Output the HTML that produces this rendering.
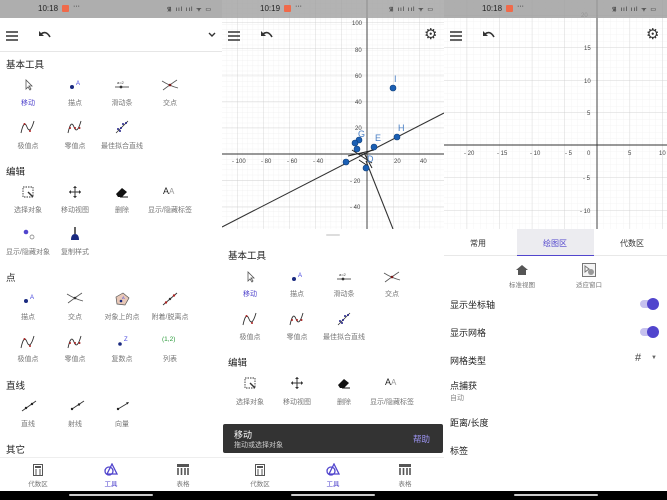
<!DOCTYPE html>
<html><head><meta charset="utf-8">
<style>
*{margin:0;padding:0;box-sizing:border-box}
body{width:667px;height:500px;overflow:hidden;background:#fff;font-family:"Liberation Sans","Noto Sans CJK SC",sans-serif;position:relative}
.p{position:absolute;top:0;height:500px;overflow:hidden;background:#fff}
.sb{position:absolute;left:0;top:0;width:100%;height:18px;background:rgba(160,160,160,.85);z-index:5}
.sb .t{position:absolute;left:38px;top:4px;font-size:8px;color:#222}
.sb .r{position:absolute;right:10px;top:5px;font-size:6px;color:#222;letter-spacing:1px}
.sb .n{position:absolute;left:62px;top:5px;width:7px;height:7px;background:#f06a4a;border-radius:1px}
.a{position:absolute;white-space:nowrap}
.lb{position:absolute;font-size:7px;color:#777;transform:translateX(-50%);white-space:nowrap}
.h{position:absolute;font-size:9.5px;color:#222;left:6px}
.bb{position:absolute;left:0;bottom:0;width:100%;height:9px;background:#000}
.bb i{position:absolute;left:50%;top:3px;width:84px;height:2px;margin-left:-42px;background:#ccc;border-radius:1px}
.nav{position:absolute;left:0;top:457px;width:100%;height:34px;background:#fff;border-top:1px solid #eee}
.nv{position:absolute;font-size:6.5px;color:#777;transform:translateX(-50%)}
.ic{position:absolute}
.row{position:absolute;left:6px;font-size:9px;color:#222}
</style></head><body>

<!-- PANEL 1 -->
<div class="p" style="left:0;width:222px">
<div class="sb"><span class="t">10:18</span><span class="n"></span><span class="a" style="left:73px;top:3px;font-size:7px">···</span><span class="r">᯾ ııl ııl ᯤ ▭</span></div>
<svg class="ic" style="left:6px;top:31px" width="13" height="10"><path d="M0 1h12M0 5h12M0 9h12" stroke="#333" stroke-width="1.5"/></svg>
<svg class="ic" style="left:38px;top:30px" width="14" height="10"><path d="M3 4 Q8 0 12 7" stroke="#333" stroke-width="1.6" fill="none"/><path d="M1 1 L1 6 L6 6Z" fill="#333"/></svg>
<svg class="ic" style="left:208px;top:32px" width="8" height="6"><path d="M1 1 L4 4 L7 1" stroke="#333" stroke-width="1.4" fill="none"/></svg>
<div style="position:absolute;left:0;top:51px;width:222px;height:1px;background:#e6e6e6"></div>
<div class="h" style="top:57px">基本工具</div>
<!-- row1 -->
<svg class="ic" style="left:24px;top:79px" width="10" height="12"><path d="M2 1 L2 10 L4 8 L6 11 L7 10 L5 7 L8 7Z" fill="#fff" stroke="#555" stroke-width=".8"/></svg>
<div class="lb" style="left:28px;top:98px;color:#5145cd">移动</div>
<svg class="ic" style="left:68px;top:79px" width="14" height="12"><circle cx="4" cy="8" r="2" fill="#1a2a80"/><text x="8" y="6" font-size="6" fill="#4444dd" font-family="Liberation Sans">A</text></svg>
<div class="lb" style="left:75px;top:98px">描点</div>
<svg class="ic" style="left:114px;top:80px" width="16" height="10"><text x="3" y="4" font-size="4" fill="#333">a=2</text><path d="M1 7h14" stroke="#333" stroke-width=".8"/><circle cx="7" cy="7" r="1.4" fill="#333"/></svg>
<div class="lb" style="left:122px;top:98px">滑动条</div>
<svg class="ic" style="left:161px;top:79px" width="18" height="12"><path d="M1 2 Q9 7 17 9 M2 11 Q10 5 16 1" stroke="#555" stroke-width=".8" fill="none"/><circle cx="9" cy="6" r="1.3" fill="#7a1a1a"/></svg>
<div class="lb" style="left:170px;top:98px">交点</div>
<!-- row2 -->
<svg class="ic" style="left:20px;top:119px" width="16" height="16"><path d="M1 14 Q4 0 7 8 Q10 16 14 2" stroke="#333" stroke-width=".9" fill="none"/><circle cx="4.5" cy="5" r="1" fill="#a22"/><circle cx="10" cy="12" r="1" fill="#a22"/></svg>
<div class="lb" style="left:28px;top:141px">极值点</div>
<svg class="ic" style="left:67px;top:119px" width="16" height="16"><path d="M1 14 Q4 0 7 8 Q10 16 14 2" stroke="#333" stroke-width=".9" fill="none"/><circle cx="3" cy="9" r="1" fill="#a22"/><circle cx="8" cy="9" r="1" fill="#a22"/><circle cx="12.5" cy="9" r="1" fill="#a22"/></svg>
<div class="lb" style="left:75px;top:141px">零值点</div>
<svg class="ic" style="left:115px;top:120px" width="14" height="14"><path d="M1 13 L13 1" stroke="#333" stroke-width=".8"/><circle cx="3" cy="9" r="1" fill="#228"/><circle cx="6" cy="8" r="1" fill="#228"/><circle cx="8" cy="4" r="1" fill="#228"/><circle cx="11" cy="3" r="1" fill="#228"/><circle cx="5" cy="11" r="1" fill="#228"/></svg>
<div class="lb" style="left:122px;top:141px">最佳拟合直线</div>
<div class="h" style="top:164px">编辑</div>
<svg class="ic" style="left:22px;top:186px" width="12" height="12"><rect x="1" y="1" width="10" height="10" fill="none" stroke="#333" stroke-dasharray="1.5 1" stroke-width=".9"/><path d="M6 6 L11 11" stroke="#333" stroke-width="1.4"/></svg>
<div class="lb" style="left:28px;top:205px">选择对象</div>
<svg class="ic" style="left:69px;top:186px" width="12" height="12"><path d="M6 0v12M0 6h12" stroke="#333" stroke-width="1"/><path d="M6 0l-2 2h4zM6 12l-2-2h4zM0 6l2-2v4zM12 6l-2-2v4z" fill="#333"/></svg>
<div class="lb" style="left:75px;top:205px">移动视图</div>
<svg class="ic" style="left:115px;top:186px" width="14" height="12"><path d="M1 8 L7 2 L12 6 L7 11 L3 11Z" fill="#111"/><path d="M5 11h8" stroke="#111"/></svg>
<div class="lb" style="left:122px;top:205px">删除</div>
<div class="a" style="left:163px;top:186px;font-size:9px;color:#222">A<span style="color:#999;font-size:8px">A</span></div>
<div class="lb" style="left:170px;top:205px">显示/隐藏标签</div>
<svg class="ic" style="left:22px;top:228px" width="14" height="12"><circle cx="4" cy="4" r="2.3" fill="#5145cd"/><circle cx="10" cy="9" r="2" fill="#fff" stroke="#777" stroke-width=".7"/></svg>
<div class="lb" style="left:28px;top:247px">显示/隐藏对象</div>
<svg class="ic" style="left:70px;top:227px" width="10" height="14"><path d="M5 0v7" stroke="#222" stroke-width="1.4"/><path d="M1 13 Q1 7 5 7 Q9 7 9 13Z" fill="#1a2a80"/></svg>
<div class="lb" style="left:75px;top:247px">复制样式</div>
<div class="h" style="top:270px">点</div>
<svg class="ic" style="left:22px;top:293px" width="14" height="12"><circle cx="4" cy="8" r="2" fill="#1a2a80"/><text x="8" y="6" font-size="6" fill="#4444dd">A</text></svg>
<div class="lb" style="left:28px;top:312px">描点</div>
<svg class="ic" style="left:66px;top:292px" width="18" height="12"><path d="M1 2 Q9 7 17 9 M2 11 Q10 5 16 1" stroke="#555" stroke-width=".8" fill="none"/><circle cx="9" cy="6" r="1.3" fill="#333"/></svg>
<div class="lb" style="left:75px;top:312px">交点</div>
<svg class="ic" style="left:114px;top:292px" width="16" height="14"><path d="M2 5 L9 1 L15 6 L11 13 L3 12Z" fill="#e8c8b8" stroke="#555" stroke-width=".7"/><circle cx="7" cy="9" r="1.3" fill="#1a2a80"/><text x="8" y="7" font-size="4" fill="#44d">A</text></svg>
<div class="lb" style="left:122px;top:312px">对象上的点</div>
<svg class="ic" style="left:162px;top:292px" width="16" height="14"><path d="M1 13 L15 1" stroke="#333" stroke-width=".9"/><circle cx="4" cy="10.5" r="1.2" fill="#a22"/><circle cx="8" cy="7" r="1.2" fill="#333"/><circle cx="12" cy="3.5" r="1.2" fill="#a22"/></svg>
<div class="lb" style="left:170px;top:312px">附着/脱离点</div>
<svg class="ic" style="left:20px;top:334px" width="16" height="16"><path d="M1 14 Q4 0 7 8 Q10 16 14 2" stroke="#333" stroke-width=".9" fill="none"/><circle cx="4.5" cy="5" r="1" fill="#a22"/><circle cx="10" cy="12" r="1" fill="#a22"/></svg>
<div class="lb" style="left:28px;top:354px">极值点</div>
<svg class="ic" style="left:67px;top:334px" width="16" height="16"><path d="M1 14 Q4 0 7 8 Q10 16 14 2" stroke="#333" stroke-width=".9" fill="none"/><circle cx="3" cy="9" r="1" fill="#a22"/><circle cx="8" cy="9" r="1" fill="#a22"/><circle cx="12.5" cy="9" r="1" fill="#a22"/></svg>
<div class="lb" style="left:75px;top:354px">零值点</div>
<svg class="ic" style="left:117px;top:335px" width="14" height="12"><circle cx="3" cy="9" r="1.8" fill="#1a2a80"/><text x="7" y="6" font-size="6" fill="#44d">Z</text></svg>
<div class="lb" style="left:122px;top:354px">复数点</div>
<div class="a" style="left:162px;top:336px;font-size:6.5px;color:#2a9a3a">(1,2)</div>
<div class="lb" style="left:170px;top:354px">列表</div>
<div class="h" style="top:378px">直线</div>
<svg class="ic" style="left:21px;top:400px" width="16" height="12"><path d="M1 11 L15 1" stroke="#333" stroke-width=".9"/><circle cx="5" cy="8" r="1.2" fill="#222"/><circle cx="11" cy="4" r="1.2" fill="#222"/></svg>
<div class="lb" style="left:28px;top:419px">直线</div>
<svg class="ic" style="left:69px;top:400px" width="16" height="12"><path d="M3 9 L15 1" stroke="#333" stroke-width=".9"/><circle cx="3" cy="9" r="1.2" fill="#222"/><circle cx="10" cy="4.5" r="1.2" fill="#222"/></svg>
<div class="lb" style="left:75px;top:419px">射线</div>
<svg class="ic" style="left:116px;top:400px" width="16" height="12"><path d="M2 9 L12 3" stroke="#333" stroke-width=".9"/><circle cx="2" cy="9" r="1.2" fill="#222"/><path d="M13 2 l-3 0.5 l1.5 2z" fill="#222"/></svg>
<div class="lb" style="left:122px;top:419px">向量</div>
<div class="h" style="top:442px">其它</div>
<div class="nav">
<svg class="ic" style="left:33px;top:6px" width="10" height="12"><rect x=".5" y=".5" width="9" height="11" fill="none" stroke="#555"/><rect x="2" y="2" width="6" height="2" fill="#555"/><path d="M2 6h2M6 6h2M2 8h2M6 8h2M2 10h2M6 10h2" stroke="#555"/></svg>
<div class="nv" style="left:38px;top:20px">代数区</div>
<svg class="ic" style="left:104px;top:5px" width="14" height="13"><circle cx="5" cy="8" r="4" fill="none" stroke="#5145cd" stroke-width="1.3"/><path d="M8 1 L13 11 L3 11Z" fill="none" stroke="#5145cd" stroke-width="1.3"/></svg>
<div class="nv" style="left:111px;top:20px;color:#5145cd">工具</div>
<svg class="ic" style="left:177px;top:6px" width="12" height="11"><rect x="0" y="0" width="12" height="3" fill="#555"/><path d="M1 4v7M4.5 4v7M8 4v7M11 4v7" stroke="#555" stroke-width="1.6"/></svg>
<div class="nv" style="left:183px;top:20px">表格</div>
</div>
<div class="bb"><i></i></div>
</div>

<!-- PANEL 2 -->
<div class="p" style="left:222px;width:222px">
<svg style="position:absolute;left:0;top:0" width="222" height="229">
<defs>
<pattern id="m2" x="145" y="154" width="5.2" height="5.2" patternUnits="userSpaceOnUse"><path d="M0 0V5.2M0 0H5.2" stroke="#eee" stroke-width=".6"/></pattern>
<pattern id="M2" x="145" y="154" width="26" height="26.4" patternUnits="userSpaceOnUse"><path d="M0 0V26.4M0 0H26" stroke="#ccc" stroke-width=".7"/></pattern>
</defs>
<rect width="222" height="229" fill="url(#m2)"/><rect width="222" height="229" fill="url(#M2)"/>
<path d="M145 0V229M0 154H222" stroke="#333" stroke-width=".9"/>
<g font-size="6" fill="#444" font-family="Liberation Sans">
<text x="10" y="163">- 100</text><text x="39" y="163">- 80</text><text x="65" y="163">- 60</text><text x="91" y="163">- 40</text><text x="172" y="163">20</text><text x="198" y="163">40</text>
<text x="130" y="25">100</text><text x="133" y="52">80</text><text x="133" y="78">60</text><text x="133" y="104">40</text><text x="133" y="130">20</text><text x="128" y="209">- 40</text><text x="128" y="183">- 20</text>
</g>
<path d="M0 227 L222 113" stroke="#333" stroke-width="1.1"/>
<path d="M144 161 L171 229" stroke="#333" stroke-width="1.1"/>
<path d="M126 156 L152 150 M130 150 L150 163 M137 160 L146 166 M142 153 L150 168" stroke="#222" stroke-width="1"/>
<g fill="#1a5fb4" stroke="#0c3d7a" stroke-width=".6">
<circle cx="171" cy="88" r="3"/><circle cx="175" cy="137" r="3"/><circle cx="152" cy="147" r="3"/><circle cx="137" cy="140" r="3"/><circle cx="133" cy="143" r="3"/><circle cx="135" cy="149" r="3"/><circle cx="124" cy="162" r="3"/><circle cx="144" cy="168" r="3"/>
</g>
<g font-size="9" fill="#4a7fc4" font-family="Liberation Sans"><text x="172" y="82">I</text><text x="176" y="131">H</text><text x="153" y="141">E</text><text x="136" y="137">G</text><text x="145" y="162">D</text></g>
</svg>
<div class="sb" style="background:rgba(160,160,160,.8)"><span class="t">10:19</span><span class="n"></span><span class="a" style="left:73px;top:3px;font-size:7px">···</span><span class="r">᯾ ııl ııl ᯤ ▭</span></div>
<svg class="ic" style="left:6px;top:31px" width="13" height="10"><path d="M0 1h12M0 5h12M0 9h12" stroke="#333" stroke-width="1.5"/></svg>
<svg class="ic" style="left:38px;top:30px" width="14" height="10"><path d="M3 4 Q8 0 12 7" stroke="#333" stroke-width="1.6" fill="none"/><path d="M1 1 L1 6 L6 6Z" fill="#333"/></svg>
<div class="a" style="left:202px;top:25px;font-size:15px;color:#333">⚙</div>
<div style="position:absolute;left:104px;top:234px;width:14px;height:2px;background:#ddd;border-radius:1px"></div>
<div class="h" style="top:248px">基本工具</div>
<svg class="ic" style="left:24px;top:271px" width="10" height="12"><path d="M2 1 L2 10 L4 8 L6 11 L7 10 L5 7 L8 7Z" fill="#fff" stroke="#555" stroke-width=".8"/></svg>
<div class="lb" style="left:28px;top:289px;color:#5145cd">移动</div>
<svg class="ic" style="left:68px;top:271px" width="14" height="12"><circle cx="4" cy="8" r="2" fill="#1a2a80"/><text x="8" y="6" font-size="6" fill="#44d">A</text></svg>
<div class="lb" style="left:75px;top:289px">描点</div>
<svg class="ic" style="left:114px;top:272px" width="16" height="10"><text x="3" y="4" font-size="4" fill="#333">a=2</text><path d="M1 7h14" stroke="#333" stroke-width=".8"/><circle cx="7" cy="7" r="1.4" fill="#333"/></svg>
<div class="lb" style="left:122px;top:289px">滑动条</div>
<svg class="ic" style="left:161px;top:271px" width="18" height="12"><path d="M1 2 Q9 7 17 9 M2 11 Q10 5 16 1" stroke="#555" stroke-width=".8" fill="none"/><circle cx="9" cy="6" r="1.3" fill="#7a1a1a"/></svg>
<div class="lb" style="left:170px;top:289px">交点</div>
<svg class="ic" style="left:20px;top:311px" width="16" height="16"><path d="M1 14 Q4 0 7 8 Q10 16 14 2" stroke="#333" stroke-width=".9" fill="none"/><circle cx="4.5" cy="5" r="1" fill="#a22"/><circle cx="10" cy="12" r="1" fill="#a22"/></svg>
<div class="lb" style="left:28px;top:332px">极值点</div>
<svg class="ic" style="left:67px;top:311px" width="16" height="16"><path d="M1 14 Q4 0 7 8 Q10 16 14 2" stroke="#333" stroke-width=".9" fill="none"/><circle cx="3" cy="9" r="1" fill="#a22"/><circle cx="8" cy="9" r="1" fill="#a22"/><circle cx="12.5" cy="9" r="1" fill="#a22"/></svg>
<div class="lb" style="left:75px;top:332px">零值点</div>
<svg class="ic" style="left:115px;top:312px" width="14" height="14"><path d="M1 13 L13 1" stroke="#333" stroke-width=".8"/><circle cx="3" cy="9" r="1" fill="#228"/><circle cx="6" cy="8" r="1" fill="#228"/><circle cx="8" cy="4" r="1" fill="#228"/><circle cx="11" cy="3" r="1" fill="#228"/><circle cx="5" cy="11" r="1" fill="#228"/></svg>
<div class="lb" style="left:122px;top:332px">最佳拟合直线</div>
<div class="h" style="top:355px">编辑</div>
<svg class="ic" style="left:22px;top:377px" width="12" height="12"><rect x="1" y="1" width="10" height="10" fill="none" stroke="#333" stroke-dasharray="1.5 1" stroke-width=".9"/><path d="M6 6 L11 11" stroke="#333" stroke-width="1.4"/></svg>
<div class="lb" style="left:28px;top:397px">选择对象</div>
<svg class="ic" style="left:69px;top:377px" width="12" height="12"><path d="M6 0v12M0 6h12" stroke="#333" stroke-width="1"/><path d="M6 0l-2 2h4zM6 12l-2-2h4zM0 6l2-2v4zM12 6l-2-2v4z" fill="#333"/></svg>
<div class="lb" style="left:75px;top:397px">移动视图</div>
<svg class="ic" style="left:115px;top:377px" width="14" height="12"><path d="M1 8 L7 2 L12 6 L7 11 L3 11Z" fill="#111"/><path d="M5 11h8" stroke="#111"/></svg>
<div class="lb" style="left:122px;top:397px">删除</div>
<div class="a" style="left:163px;top:377px;font-size:9px;color:#222">A<span style="color:#999;font-size:8px">A</span></div>
<div class="lb" style="left:170px;top:397px">显示/隐藏标签</div>
<div style="position:absolute;left:1px;top:424px;width:220px;height:29px;background:#333;border-radius:2px">
<div class="a" style="left:11px;top:4px;font-size:9px;color:#fff">移动</div>
<div class="a" style="left:11px;top:16px;font-size:7px;color:#ccc">拖动或选择对象</div>
<div class="a" style="left:190px;top:9px;font-size:8.5px;color:#9b93f0">帮助</div>
</div>
<div class="nav">
<svg class="ic" style="left:33px;top:6px" width="10" height="12"><rect x=".5" y=".5" width="9" height="11" fill="none" stroke="#555"/><rect x="2" y="2" width="6" height="2" fill="#555"/><path d="M2 6h2M6 6h2M2 8h2M6 8h2M2 10h2M6 10h2" stroke="#555"/></svg>
<div class="nv" style="left:38px;top:20px">代数区</div>
<svg class="ic" style="left:104px;top:5px" width="14" height="13"><circle cx="5" cy="8" r="4" fill="none" stroke="#5145cd" stroke-width="1.3"/><path d="M8 1 L13 11 L3 11Z" fill="none" stroke="#5145cd" stroke-width="1.3"/></svg>
<div class="nv" style="left:111px;top:20px;color:#5145cd">工具</div>
<svg class="ic" style="left:177px;top:6px" width="12" height="11"><rect x="0" y="0" width="12" height="3" fill="#555"/><path d="M1 4v7M4.5 4v7M8 4v7M11 4v7" stroke="#555" stroke-width="1.6"/></svg>
<div class="nv" style="left:183px;top:20px">表格</div>
</div>
<div class="bb"><i></i></div>
</div>

<!-- PANEL 3 -->
<div class="p" style="left:444px;width:223px">
<svg style="position:absolute;left:0;top:0" width="223" height="229">
<defs>
<pattern id="m3" x="153" y="145" width="6.5" height="6.5" patternUnits="userSpaceOnUse"><path d="M0 0V6.5M0 0H6.5" stroke="#eee" stroke-width=".6"/></pattern>
<pattern id="M3" x="153" y="145" width="32.6" height="32.5" patternUnits="userSpaceOnUse"><path d="M0 0V32.5M0 0H32.6" stroke="#ccc" stroke-width=".7"/></pattern>
</defs>
<rect width="223" height="229" fill="url(#m3)"/><rect width="223" height="229" fill="url(#M3)"/>
<path d="M153 0V229M0 145H223" stroke="#333" stroke-width=".9"/>
<g font-size="6" fill="#444" font-family="Liberation Sans">
<text x="20" y="155">- 20</text><text x="53" y="155">- 15</text><text x="86" y="155">- 10</text><text x="121" y="155">- 5</text><text x="143" y="155">0</text><text x="184" y="155">5</text><text x="215" y="155">10</text>
<text x="137" y="17">20</text><text x="140" y="50">15</text><text x="140" y="83">10</text><text x="143" y="115">5</text><text x="139" y="180">- 5</text><text x="136" y="213">- 10</text>
</g>
</svg>
<div class="sb"><span class="t">10:18</span><span class="n"></span><span class="a" style="left:73px;top:3px;font-size:7px">···</span><span class="r">᯾ ııl ııl ᯤ ▭</span></div>
<svg class="ic" style="left:6px;top:31px" width="13" height="10"><path d="M0 1h12M0 5h12M0 9h12" stroke="#333" stroke-width="1.5"/></svg>
<svg class="ic" style="left:38px;top:30px" width="14" height="10"><path d="M3 4 Q8 0 12 7" stroke="#333" stroke-width="1.6" fill="none"/><path d="M1 1 L1 6 L6 6Z" fill="#333"/></svg>
<div class="a" style="left:202px;top:25px;font-size:15px;color:#333">⚙</div>
<div style="position:absolute;left:0;top:229px;width:223px;height:27px;background:#fff;border-bottom:1px solid #e8e8e8"></div>
<div style="position:absolute;left:73px;top:229px;width:77px;height:27px;background:#ececf0;border-bottom:1.5px solid #5145cd"></div>
<div class="a" style="left:26px;top:238px;font-size:8px;color:#333">常用</div>
<div class="a" style="left:99px;top:238px;font-size:8px;color:#5145cd">绘图区</div>
<div class="a" style="left:176px;top:238px;font-size:8px;color:#333">代数区</div>
<svg class="ic" style="left:72px;top:265px" width="12" height="10"><path d="M6 0 L12 5 L10 5 L10 10 L2 10 L2 5 L0 5Z" fill="#555"/></svg>
<div class="lb" style="left:78px;top:279px;font-size:6.5px">标准视图</div>
<svg class="ic" style="left:138px;top:263px" width="14" height="14"><rect x=".5" y=".5" width="13" height="13" fill="#f4f4f4" stroke="#777"/><path d="M3 3 L7 6 L3 9Z" fill="none" stroke="#777"/><circle cx="9" cy="9" r="3" fill="#999"/></svg>
<div class="lb" style="left:145px;top:279px;font-size:6.5px">适应窗口</div>
<div class="row" style="top:298px">显示坐标轴</div>
<div style="position:absolute;left:196px;top:300px;width:17px;height:8px;border-radius:4px;background:#c6c1ee"></div>
<div style="position:absolute;left:203px;top:298px;width:12px;height:12px;border-radius:6px;background:#5145cd"></div>
<div class="row" style="top:326px">显示网格</div>
<div style="position:absolute;left:196px;top:328px;width:17px;height:8px;border-radius:4px;background:#c6c1ee"></div>
<div style="position:absolute;left:203px;top:326px;width:12px;height:12px;border-radius:6px;background:#5145cd"></div>
<div class="row" style="top:354px">网格类型</div>
<div class="a" style="left:191px;top:352px;font-size:11px;color:#444">#</div>
<div class="a" style="left:207px;top:355px;font-size:6px;color:#666">▼</div>
<div class="row" style="top:379px">点捕获</div>
<div class="a" style="left:6px;top:393px;font-size:7px;color:#888">自动</div>
<div class="row" style="top:416px">距离/长度</div>
<div class="row" style="top:444px">标签</div>
<div class="bb"><i></i></div>
</div>
</body></html>
